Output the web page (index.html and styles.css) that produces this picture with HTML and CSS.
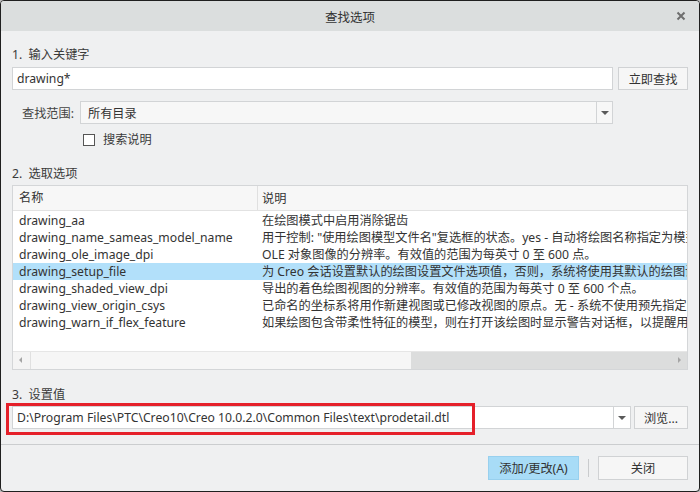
FILE: index.html
```html
<!DOCTYPE html>
<html>
<head>
  <meta charset="UTF-8">
  <title>查找选项</title>
  <link rel="stylesheet" href="styles.css">
</head>
<body>
  <div class="window">
    <div class="titlebar">
      <span></span>
      <span class="title">查找选项</span>
      <span class="close">
        <svg width="10" height="10" viewBox="0 0 10 10"><path d="M1.5 1.5 L8.5 8.5 M8.5 1.5 L1.5 8.5" stroke="#6e6e6e" stroke-width="2"/></svg>
      </span>
    </div>

    <div class="body">
      <!-- Step 1 -->
      <div class="section-label">1.&nbsp; 输入关键字</div>
      <div class="search-row">
        <div class="input">drawing*</div>
        <button class="btn find-btn">立即查找</button>
      </div>
      <div class="scope-row">
        <span class="scope-label">查找范围:</span>
        <div class="select scope-select">
          <span class="select-text">所有目录</span>
          <span class="select-arrow"></span>
        </div>
      </div>
      <div class="check-row">
        <span class="checkbox"></span>
        <span>搜索说明</span>
      </div>

      <!-- Step 2 -->
      <div class="section-label">2.&nbsp; 选取选项</div>
      <div class="table">
        <div class="thead">
          <div class="cell name">名称</div>
          <div class="cell desc">说明</div>
        </div>
        <div class="tbody">
          <div class="tr"><div class="cell name">drawing_aa</div><div class="cell desc">在绘图模式中启用消除锯齿</div></div>
          <div class="tr"><div class="cell name">drawing_name_sameas_model_name</div><div class="cell desc">用于控制: "使用绘图模型文件名"复选框的状态。yes - 自动将绘图名称指定为模型名称。</div></div>
          <div class="tr"><div class="cell name">drawing_ole_image_dpi</div><div class="cell desc">OLE 对象图像的分辨率。有效值的范围为每英寸 0 至 600 点。</div></div>
          <div class="tr selected"><div class="cell name">drawing_setup_file</div><div class="cell desc">为 Creo 会话设置默认的绘图设置文件选项值，否则，系统将使用其默认的绘图设置文件。</div></div>
          <div class="tr"><div class="cell name">drawing_shaded_view_dpi</div><div class="cell desc">导出的着色绘图视图的分辨率。有效值的范围为每英寸 0 至 600 个点。</div></div>
          <div class="tr"><div class="cell name">drawing_view_origin_csys</div><div class="cell desc">已命名的坐标系将用作新建视图或已修改视图的原点。无 - 系统不使用预先指定的坐标系。</div></div>
          <div class="tr"><div class="cell name">drawing_warn_if_flex_feature</div><div class="cell desc">如果绘图包含带柔性特征的模型，则在打开该绘图时显示警告对话框，以提醒用户。</div></div>
        </div>
        <div class="hscroll">
          <span class="scroll-btn left"></span>
          <span class="scroll-thumb"></span>
          <span class="scroll-track"></span>
          <span class="scroll-btn right"></span>
        </div>
      </div>

      <!-- Step 3 -->
      <div class="section-label">3.&nbsp; 设置值</div>
      <div class="value-row">
        <div class="select value-select">
          <span class="select-text">D:\Program Files\PTC\Creo10\Creo 10.0.2.0\Common Files\text\prodetail.dtl</span>
          <span class="select-arrow"></span>
        </div>
        <button class="btn browse-btn">浏览...</button>
        <div class="mark-box"></div>
      </div>
    </div>

    <div class="footer">
      <button class="btn primary-btn">添加/更改(A)</button>
      <span class="footer-sep"></span>
      <button class="btn close-btn">关闭</button>
    </div>
  </div>
</body>
</html>
```

FILE: styles.css
```css
body {
  margin: 0;
  background: #bfbfbf;
  font-family: "Noto Sans", "Noto Sans CJK SC", sans-serif;
  font-size: 12.2px;
  color: #333;
}

.window {
  width: 700px;
  height: 492px;
  box-sizing: border-box;
  border: 1px solid #1f1f1f;
  border-radius: 4px;
  background: #eff0f1;
  display: flex;
  flex-direction: column;
  overflow: hidden;
}

.titlebar {
  height: 30px;
  flex: none;
  background: #dbdede;
  display: grid;
  grid-template-columns: 1fr auto 1fr;
  align-items: center;
  color: #333;
}

.title {
  font-size: 12.5px;
}

.close {
  justify-self: end;
  margin-right: 13px;
  display: flex;
  align-items: center;
}

.body {
  flex: 1;
  padding: 0 11px;
  display: flex;
  flex-direction: column;
}

.section-label {
  line-height: 18px;
  height: 18px;
  color: #3a3a3a;
}

.body > .section-label:first-child {
  margin-top: 15px;
}

/* Inputs */
.search-row {
  display: flex;
  gap: 5px;
  margin-top: 3px;
}

.input {
  flex: 1;
  height: 23px;
  box-sizing: border-box;
  background: #fff;
  border: 1px solid #d2d4d6;
  padding: 0 4px;
  line-height: 21px;
  color: #333;
}

.btn {
  font-family: "Noto Sans", "Noto Sans CJK SC", sans-serif;
  font-size: 12.2px;
  color: #333;
  background: #f6f6f6;
  border: 1px solid #d0d2d4;
  padding: 0;
  height: 23px;
  box-sizing: border-box;
}

.find-btn {
  width: 70px;
}

.scope-row {
  display: flex;
  align-items: center;
  gap: 6px;
  margin-top: 11px;
  padding-left: 10px;
  margin-right: 75px;
}

.scope-label {
  color: #444;
  white-space: nowrap;
  flex: none;
  width: 52px;
}

.select {
  flex: 1;
  height: 23px;
  box-sizing: border-box;
  background: #f7f7f7;
  border: 1px solid #d2d4d6;
  display: flex;
  align-items: center;
}

.select-text {
  flex: 1;
  padding-left: 7px;
  white-space: nowrap;
  overflow: hidden;
}

.select-arrow {
  width: 15px;
  height: 21px;
  border-left: 1px solid #d2d4d6;
  position: relative;
  flex: none;
}

.select-arrow::after {
  content: "";
  position: absolute;
  left: 4px;
  top: 9px;
  border-left: 4px solid transparent;
  border-right: 4px solid transparent;
  border-top: 4px solid #5a5a5a;
}

.check-row {
  display: flex;
  align-items: center;
  gap: 8px;
  margin-top: 7px;
  padding-left: 71px;
  line-height: 18px;
  color: #3a3a3a;
}

.checkbox {
  width: 12px;
  height: 12px;
  box-sizing: border-box;
  border: 1px solid #555;
  background: #fff;
}

.check-row + .section-label {
  margin-top: 16px;
}

/* Table */
.table {
  margin-top: 2px;
  border: 1px solid #d4d6d8;
  background: #fff;
}

.thead {
  display: grid;
  grid-template-columns: 245px 1fr;
  height: 24px;
  background: #f7f7f7;
  border-bottom: 1px solid #e2e2e2;
  align-items: center;
}

.thead .cell.name {
  border-right: 1px solid #e0e0e0;
  line-height: 24px;
}

.cell.name {
  padding-left: 6px;
}

.cell.desc {
  padding-left: 4px;
  white-space: nowrap;
  overflow: hidden;
}

.tbody {
  height: 140px;
  box-sizing: border-box;
  padding-top: 1px;
}

.tr {
  display: grid;
  grid-template-columns: 245px 1fr;
  height: 17px;
  line-height: 17px;
  color: #333;
}

.tr.selected {
  background: #b2e0fa;
}

.hscroll {
  height: 17px;
  display: flex;
  border-top: 1px solid #e6e6e6;
}

.scroll-btn {
  width: 17px;
  flex: none;
  position: relative;
}

.scroll-btn.left {
  background: #f4f4f4;
  border-right: 1px solid #e0e0e0;
}

.scroll-btn.right {
  background: #dcdddd;
}

.scroll-btn.left::after,
.scroll-btn.right::after {
  content: "";
  position: absolute;
  top: 5px;
  border-top: 3px solid transparent;
  border-bottom: 3px solid transparent;
}

.scroll-btn.left::after {
  left: 6px;
  border-right: 3px solid #a5a5a5;
}

.scroll-btn.right::after {
  left: 8px;
  border-left: 3px solid #a5a5a5;
}

.scroll-thumb {
  width: 380px;
  background: #f6f6f6;
}

.scroll-track {
  flex: 1;
  background: #dcdddd;
}

.table + .section-label {
  margin-top: 16px;
}

/* Value */
.value-row {
  position: relative;
  display: flex;
  gap: 3px;
  margin-top: 2px;
}

.value-select {
  background: #fff;
}

.value-select .select-text {
  padding-left: 4px;
}

.value-select .select-arrow {
  width: 16px;
}

.value-select .select-arrow::after {
  left: 4px;
}

.browse-btn {
  width: 54px;
}

.mark-box {
  position: absolute;
  left: -6px;
  top: -3px;
  width: 469px;
  height: 32px;
  box-sizing: border-box;
  border: 3px solid #e5202a;
}

/* Footer */
.footer {
  flex: none;
  height: 47px;
  box-sizing: border-box;
  border-top: 1px solid #cbcdcf;
  display: flex;
  align-items: flex-start;
  justify-content: flex-end;
  padding: 11px 11px 0;
  gap: 9px;
}

.footer .btn {
  height: 24px;
}

.primary-btn {
  width: 91px;
  background: #a8dcf7;
  border-color: #98d0ee;
}

.footer-sep {
  width: 1px;
  height: 18px;
  margin-top: 3px;
  background: #c9cbcd;
}

.close-btn {
  width: 90px;
}
```
